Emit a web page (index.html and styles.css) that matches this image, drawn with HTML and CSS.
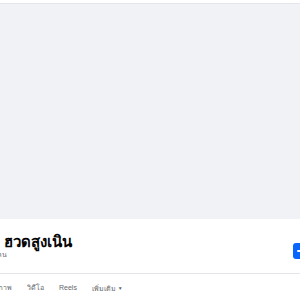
FILE: index.html
```html
<!DOCTYPE html>
<html lang="th">
<head>
    <meta charset="UTF-8">
    <meta name="viewport" content="width=device-width, initial-scale=1.0">
    <title>ฮวดสูงเนิน</title>
    <link rel="stylesheet" href="styles.css">
</head>
<body>
    <div class="page">
        <div class="cover"></div>
        <div class="header">
            <div class="info">
                <h1 class="name">ฮวดสูงเนิน</h1>
                <p class="meta">คน</p>
            </div>
            <button class="action" type="button">
                <svg width="10" height="10" viewBox="0 0 10 10"><path d="M5 1v8M1 5h8" stroke="#fff" stroke-width="2" stroke-linecap="round"/></svg>
            </button>
        </div>
        <nav class="tabs">
            <a class="tab" href="#">ภาพ</a>
            <a class="tab" href="#">วิดีโอ</a>
            <a class="tab" href="#">Reels</a>
            <a class="tab" href="#">เพิ่มเติม <span class="caret">▼</span></a>
        </nav>
    </div>
</body>
</html>
```

FILE: styles.css
```css
* {
    margin: 0;
    padding: 0;
    box-sizing: border-box;
}

body {
    background-color: white;
    font-family: "Liberation Sans", Arial, sans-serif;
    color: #050505;
    overflow: hidden;
}

.page {
    padding-top: 3px;
}

.cover {
    height: 216px;
    background-color: #f0f2f5;
    border-top: 1px solid #e4e6eb;
}

.header {
    display: flex;
    justify-content: space-between;
    align-items: flex-start;
    height: 55px;
    border-bottom: 1px solid #e4e6eb;
}

.info {
    padding: 13px 0 0 4px;
}

.name {
    font-size: 15px;
    font-weight: bold;
    line-height: 20px;
}

.meta {
    margin: -2px 0 0 -7px;
    font-size: 7px;
    color: #65676b;
    line-height: 10px;
}

.action {
    display: flex;
    align-items: center;
    margin: 24px -30px 0 0;
    width: 37px;
    height: 16px;
    padding-left: 4px;
    border: none;
    border-radius: 3px;
    background-color: #0866ff;
}

.tabs {
    display: flex;
    gap: 15px;
    margin-left: -2px;
    padding-top: 9px;
}

.tab {
    font-size: 7px;
    color: #65676b;
    text-decoration: none;
    line-height: 10px;
}

.caret {
    font-size: 5px;
    vertical-align: 1px;
}
```
